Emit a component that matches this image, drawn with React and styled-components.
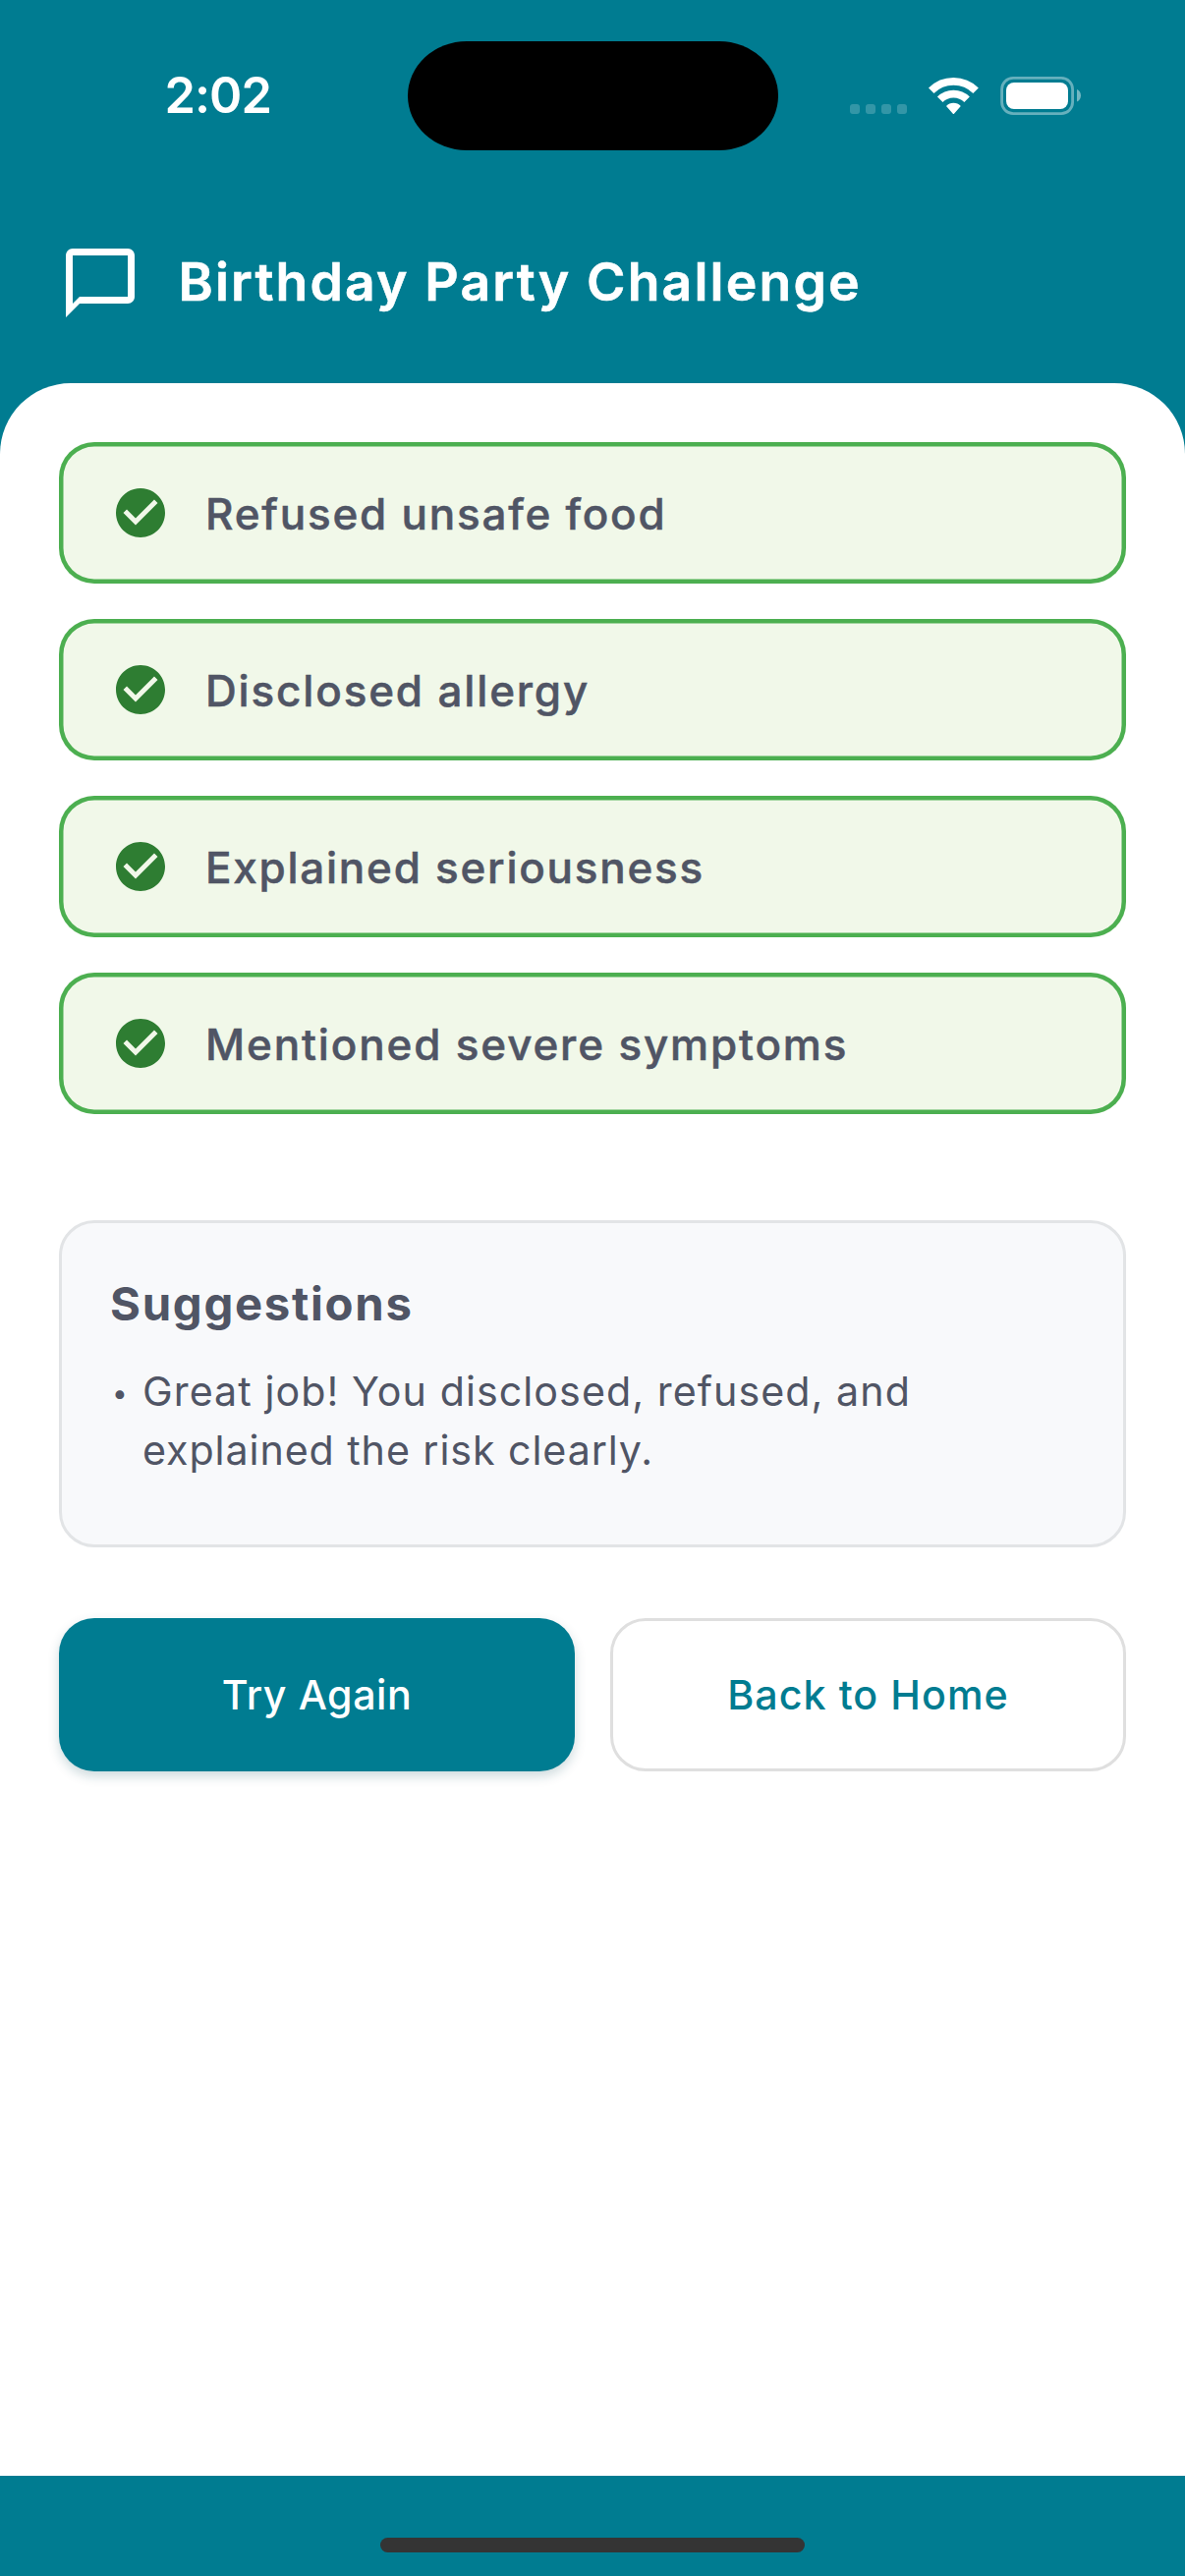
import React from "react";
import styled, { createGlobalStyle } from "styled-components";

const teal = "#007c91";
const ink = "#505565";

const GlobalStyle = createGlobalStyle`
  *, *::before, *::after { box-sizing: border-box; }
  body { margin: 0; background: ${teal}; }
`;

const Screen = styled.div`
  display: flex;
  flex-direction: column;
  width: 1206px;
  height: 2622px;
  background: ${teal};
  color: ${ink};
  font-family: Inter, "Liberation Sans", sans-serif;
`;

const StatusBar = styled.div`
  display: grid;
  grid-template-columns: 414.5px 377px 1fr;
  align-items: center;
  height: 194px;
  flex: none;
`;

const Clock = styled.time`
  padding: 0 0 0 167.5px;
  color: #fff;
  font-size: 50.5px;
  font-weight: 600;
  line-height: 60px;
  letter-spacing: -1px;
`;

const Island = styled.div`
  height: 111px;
  border-radius: 60px / 55.5px;
  background: #000;
`;

const StatusIcons = styled.div`
  display: flex;
  align-items: center;
  padding-left: 73.5px;
  color: #fff;

  svg { display: block; flex: none; }
`;

const WifiIcon = styled.svg`
  margin-left: 22.3px;
`;

const BatteryIcon = styled.svg`
  margin-left: 21.7px;
`;

const Header = styled.header`
  display: flex;
  align-items: center;
  height: 196px;
  padding: 0 60px 8px;
  flex: none;
`;

const Title = styled.h1`
  margin: 0 0 2px 37.5px;
  color: #fff;
  font-size: 53.5px;
  font-weight: 600;
  line-height: 64px;
  letter-spacing: 2.15px;
  white-space: nowrap;
  -webkit-text-stroke: 0.6px currentColor;
`;

const Panel = styled.main`
  flex: 1;
  padding: 60px;
  border-radius: 72px 72px 0 0;
  background: #fff;
`;

const Checklist = styled.ul`
  display: flex;
  flex-direction: column;
  gap: 36px;
  margin: 0;
  padding: 0;
  list-style: none;
`;

const CheckItem = styled.li`
  display: flex;
  align-items: center;
  gap: 36.5px;
  height: 144px;
  padding: 0 52.5px;
  border-radius: 36px;
  background: #f1f8e9;
  box-shadow: inset 0 0 0 4.5px #4caf50;
`;

const CheckLabel = styled.span`
  padding-top: 2px;
  font-size: 44px;
  font-weight: 500;
  line-height: 60px;
  letter-spacing: ${({ $tracking }) => $tracking}px;
  white-space: nowrap;
  -webkit-text-stroke: 0.5px currentColor;
`;

const Suggestions = styled.section`
  height: 333px;
  margin-top: 108px;
  padding: 48px;
  border: 3px solid #e2e4e6;
  border-radius: 36px;
  background: #f8f9fb;
`;

const SuggestionsTitle = styled.h2`
  margin: 0 0 25px 1px;
  font-size: 47.3px;
  font-weight: 700;
  line-height: 68px;
  letter-spacing: 1.7px;
`;

const SuggestionRow = styled.div`
  display: flex;
  font-size: 41.2px;
  line-height: 60px;
`;

const Bullet = styled.span`
  width: 34px;
  padding: 2px 0 0 3px;
  font-size: 28px;
  flex: none;
`;

const SuggestionText = styled.p`
  margin: 0;
`;

const SuggestionLine = styled.span`
  display: block;
  letter-spacing: ${({ $tracking }) => $tracking}px;
  white-space: nowrap;
`;

const Actions = styled.div`
  display: grid;
  grid-template-columns: 1fr 1fr;
  gap: 36px;
  margin-top: 72px;
`;

const ActionButton = styled.button`
  height: 156px;
  padding: 0;
  border: ${({ $primary }) => ($primary ? "none" : "3px solid #dfdfdf")};
  border-radius: 36px;
  background: ${({ $primary }) => ($primary ? teal : "#fff")};
  color: ${({ $primary }) => ($primary ? "#fff" : teal)};
  box-shadow: ${({ $primary }) =>
    $primary ? "0 5px 12px rgba(0, 70, 85, 0.2)" : "none"};
  font-family: inherit;
  font-size: 41.2px;
  font-weight: 500;
  line-height: 60px;
  letter-spacing: ${({ $tracking }) => $tracking}px;
`;

const BottomBar = styled.footer`
  display: flex;
  justify-content: center;
  align-items: flex-end;
  height: 102px;
  padding-bottom: 24px;
  flex: none;
`;

const HomeIndicator = styled.div`
  width: 432px;
  height: 15px;
  border-radius: 7.5px;
  background: #343434;
`;

const checks = [
  { label: "Refused unsafe food", tracking: 1.76 },
  { label: "Disclosed allergy", tracking: 1.84 },
  { label: "Explained seriousness", tracking: 1.74 },
  { label: "Mentioned severe symptoms", tracking: 1.84 },
];

const SignalDots = () => (
  <svg width="58" height="40" viewBox="0 0 58 40" fill="currentColor" opacity="0.2">
    {[0, 16, 32, 48].map((x) => (
      <rect key={x} x={x} y="29" width="10" height="10" rx="3" />
    ))}
  </svg>
);

const Wifi = () => (
  <WifiIcon width="51" height="40" viewBox="0 0 51 40" fill="none" stroke="currentColor" strokeWidth="7.8">
    <path d="M2.7 15.3A32.1 32.1 0 0 1 48.1 15.3" />
    <path d="M11.7 24.3A19.4 19.4 0 0 1 39.1 24.3" />
    <path d="M18 31A10.3 10.3 0 0 1 32.8 31L26.2 38.6Q25.4 39.6 24.6 38.6Z" fill="currentColor" stroke="none" />
  </WifiIcon>
);

const Battery = () => (
  <BatteryIcon width="83" height="40" viewBox="0 0 83 40" fill="currentColor">
    <rect x="1.6" y="2.4" width="72" height="36.2" rx="11.5" fill="none" stroke="currentColor" strokeWidth="2.8" opacity="0.4" />
    <rect x="6" y="7" width="63" height="27" rx="8" />
    <path d="M78 14C83.3 16 83.3 24.4 78 26.4Z" opacity="0.45" />
  </BatteryIcon>
);

const ChatBubble = () => (
  <svg width="84" height="84" viewBox="0 0 24 24" fill="#fff">
    <path d="M20 2H4c-1.1 0-2 .9-2 2v18l4-4h14c1.1 0 2-.9 2-2V4c0-1.1-.9-2-2-2zm0 14H6l-2 2V4h16v12z" />
  </svg>
);

const CheckCircle = () => (
  <svg width="60" height="60" viewBox="0 0 24 24" fill="#2e7d32">
    <path d="M12 2C6.48 2 2 6.48 2 12s4.48 10 10 10 10-4.48 10-10S17.52 2 12 2zm-2 15l-5-5 1.41-1.41L10 14.17l7.59-7.59L19 8l-9 9z" />
  </svg>
);

export default function App() {
  return (
    <>
      <GlobalStyle />
      <Screen>
        <StatusBar>
          <Clock>2:02</Clock>
          <Island />
          <StatusIcons>
            <SignalDots />
            <Wifi />
            <Battery />
          </StatusIcons>
        </StatusBar>
        <Header>
          <ChatBubble />
          <Title>Birthday Party Challenge</Title>
        </Header>
        <Panel>
          <Checklist>
            {checks.map(({ label, tracking }) => (
              <CheckItem key={label}>
                <CheckCircle />
                <CheckLabel $tracking={tracking}>{label}</CheckLabel>
              </CheckItem>
            ))}
          </Checklist>
          <Suggestions>
            <SuggestionsTitle>Suggestions</SuggestionsTitle>
            <SuggestionRow>
              <Bullet>•</Bullet>
              <SuggestionText>
                <SuggestionLine $tracking={1.05}>Great job! You disclosed, refused, and </SuggestionLine>
                <SuggestionLine $tracking={0.92}>explained the risk clearly.</SuggestionLine>
              </SuggestionText>
            </SuggestionRow>
          </Suggestions>
          <Actions>
            <ActionButton $primary $tracking={0.55}>Try Again</ActionButton>
            <ActionButton $tracking={1.05}>Back to Home</ActionButton>
          </Actions>
        </Panel>
        <BottomBar>
          <HomeIndicator />
        </BottomBar>
      </Screen>
    </>
  );
}
